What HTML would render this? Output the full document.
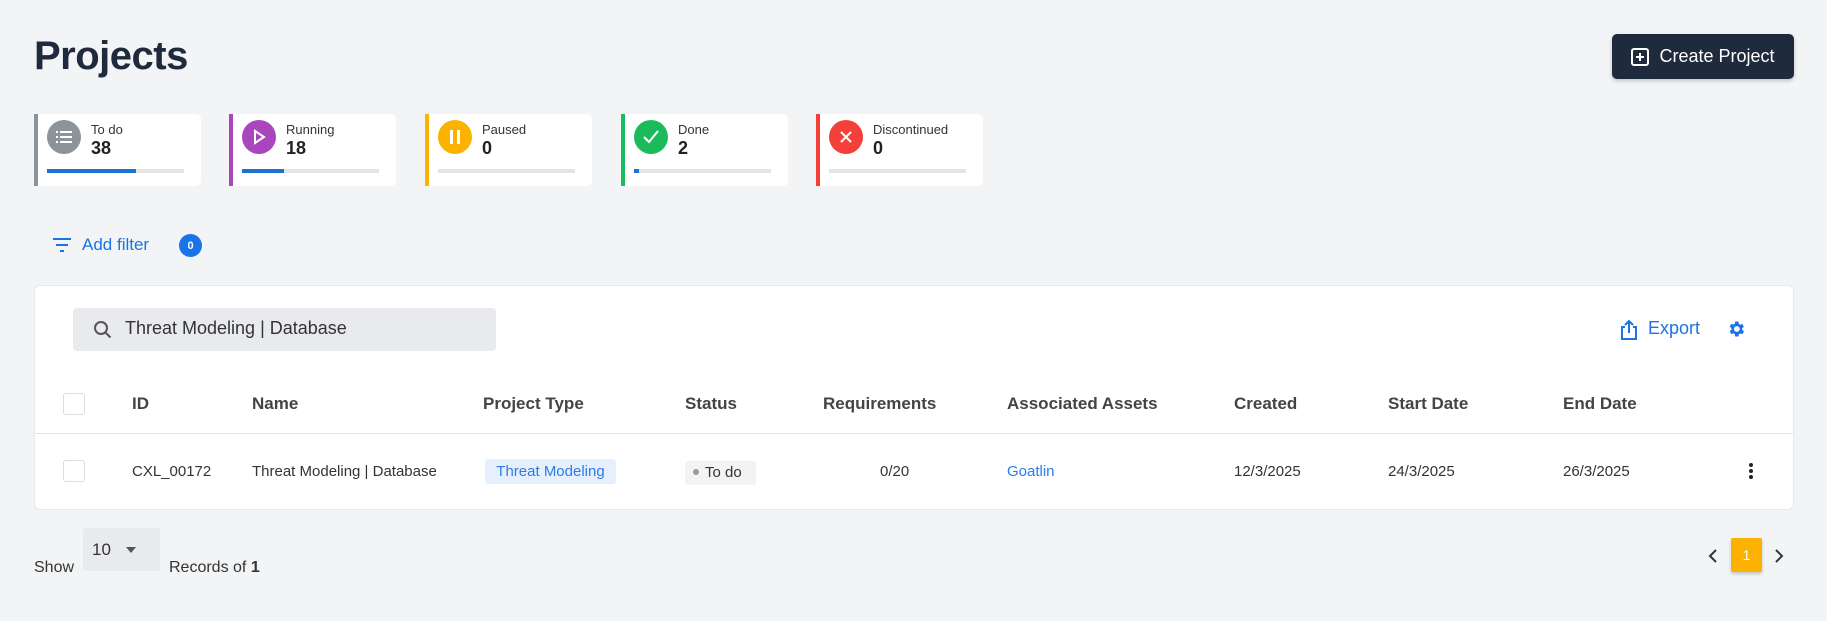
<!DOCTYPE html>
<html><head><meta charset="utf-8"><style>
*{box-sizing:border-box;margin:0;padding:0}
body{width:1827px;height:621px;background:#f3f4f6;font-family:"Liberation Sans",sans-serif;color:#222;position:relative;overflow:hidden}
.a{position:absolute;white-space:nowrap}
h1{position:absolute;left:34px;top:34px;font-size:40px;font-weight:bold;color:#1f2a3c;letter-spacing:-0.5px}
.btn{left:1612px;top:34px;width:182px;height:45px;background:#1f2a3c;border-radius:5px;color:#fff;font-size:18px;display:flex;align-items:center;justify-content:center;gap:10px;box-shadow:0 2px 4px rgba(0,0,0,.2)}
.card{position:absolute;top:114px;width:167px;height:72px;background:#fff;border-radius:0 5px 5px 0;border-left:4px solid}
.card .ic{position:absolute;left:9px;top:6px;width:34px;height:34px;border-radius:50%;display:flex;align-items:center;justify-content:center;color:#fff}
.card .lb{position:absolute;left:53px;top:8px;font-size:13px;color:#333}
.card .n{position:absolute;left:53px;top:24px;font-size:18px;font-weight:bold;color:#222}
.card .bar{position:absolute;left:9px;top:55px;width:137px;height:4px;background:#e4e4e4}
.card .bar i{display:block;height:4px;background:#1e73d2}
.tbl{left:34px;top:285px;width:1760px;height:225px;background:#fff;border-radius:6px;border:1px solid #e8e9ec}
.th{position:absolute;top:394px;font-size:17px;font-weight:bold;color:#444}
.td{position:absolute;top:463px;font-size:15px;color:#333}
.cb{position:absolute;left:63px;width:22px;height:22px;border:1px solid #ddd;border-radius:3px;background:#fff}
</style></head><body>
<h1>Projects</h1>
<div class="a btn"><svg width="18" height="18" viewBox="0 0 18 18"><rect x="1" y="1" width="16" height="16" rx="2" fill="none" stroke="#fff" stroke-width="2"/><path d="M9 5v8M5 9h8" stroke="#fff" stroke-width="2"/></svg>Create Project</div>

<div class="card" style="left:34px;border-color:#8d939b"><div class="ic" style="background:#8d939b"><svg width="16" height="14"><g fill="#fff"><rect x="0" y="1" width="2" height="2"/><rect x="4" y="1" width="12" height="2"/><rect x="0" y="6" width="2" height="2"/><rect x="4" y="6" width="12" height="2"/><rect x="0" y="11" width="2" height="2"/><rect x="4" y="11" width="12" height="2"/></g></svg></div><div class="lb">To do</div><div class="n">38</div><div class="bar"><i style="width:89px"></i></div></div>
<div class="card" style="left:229px;border-color:#a946bb"><div class="ic" style="background:#a946bb"><svg width="14" height="16"><path d="M3 2L12 8L3 14Z" fill="none" stroke="#fff" stroke-width="2"/></svg></div><div class="lb">Running</div><div class="n">18</div><div class="bar"><i style="width:42px"></i></div></div>
<div class="card" style="left:425px;border-color:#fbb200"><div class="ic" style="background:#fbb200"><svg width="14" height="16"><rect x="2" y="1" width="3" height="14" fill="#fff"/><rect x="9" y="1" width="3" height="14" fill="#fff"/></svg></div><div class="lb">Paused</div><div class="n">0</div><div class="bar"></div></div>
<div class="card" style="left:621px;border-color:#1bbb5c"><div class="ic" style="background:#1bbb5c"><svg width="18" height="16"><path d="M2 8l5 5L16 2" fill="none" stroke="#fff" stroke-width="2"/></svg></div><div class="lb">Done</div><div class="n">2</div><div class="bar"><i style="width:5px"></i></div></div>
<div class="card" style="left:816px;border-color:#f5403a"><div class="ic" style="background:#f5403a"><svg width="12" height="12"><path d="M1 1l10 10M11 1L1 11" stroke="#fff" stroke-width="2"/></svg></div><div class="lb">Discontinued</div><div class="n">0</div><div class="bar"></div></div>

<svg class="a" style="left:52px;top:237px" width="20" height="16"><path d="M1 2h18M4 8h12M8 14h4" stroke="#1a73e8" stroke-width="2"/></svg>
<div class="a" style="left:82px;top:235px;font-size:17px;color:#1a73e8">Add filter</div>
<div class="a" style="left:179px;top:234px;width:23px;height:23px;border-radius:50%;background:#1a73e8;color:#fff;font-size:11px;font-weight:bold;display:flex;align-items:center;justify-content:center">0</div>

<div class="a tbl"></div>
<div class="a" style="left:73px;top:308px;width:423px;height:43px;background:#e8eaee;border-radius:4px"></div>
<svg class="a" style="left:93px;top:320px" width="20" height="20"><circle cx="8" cy="8" r="6" fill="none" stroke="#555" stroke-width="2"/><path d="M12.5 12.5l5 5" stroke="#555" stroke-width="2"/></svg>
<div class="a" style="left:125px;top:318px;font-size:18px;color:#333">Threat Modeling | Database</div>
<svg class="a" style="left:1620px;top:319px" width="18" height="22"><path d="M5 8H2v12h14V8h-3M9 14V2M5 6l4-4 4 4" fill="none" stroke="#1a73e8" stroke-width="2"/></svg>
<div class="a" style="left:1648px;top:318px;font-size:18px;color:#1a73e8">Export</div>
<svg class="a" style="left:1726px;top:319px" width="20" height="20" viewBox="0 0 24 24"><path fill="#1a73e8" d="M19.4 13a7.5 7.5 0 000-2l2.1-1.6-2-3.5-2.5 1a7 7 0 00-1.7-1L15 3h-4l-.4 2.7a7 7 0 00-1.7 1l-2.5-1-2 3.5L6.6 11a7.5 7.5 0 000 2l-2.2 1.6 2 3.5 2.5-1a7 7 0 001.7 1L11 21h4l.4-2.7a7 7 0 001.7-1l2.5 1 2-3.5zM13 15.5a3.5 3.5 0 110-7 3.5 3.5 0 010 7z"/></svg>

<div class="cb" style="top:393px"></div>
<div class="th" style="left:132px">ID</div>
<div class="th" style="left:252px">Name</div>
<div class="th" style="left:483px">Project Type</div>
<div class="th" style="left:685px">Status</div>
<div class="th" style="left:823px">Requirements</div>
<div class="th" style="left:1007px">Associated Assets</div>
<div class="th" style="left:1234px">Created</div>
<div class="th" style="left:1388px">Start Date</div>
<div class="th" style="left:1563px">End Date</div>
<div class="a" style="left:35px;top:433px;width:1758px;height:1px;background:#e3e4e7"></div>

<div class="cb" style="top:460px"></div>
<div class="td" style="left:132px">CXL_00172</div>
<div class="td" style="left:252px">Threat Modeling | Database</div>
<div class="a" style="left:485px;top:459px;width:131px;height:25px;background:#e6f0fd;border-radius:3px;color:#2d7be5;font-size:15px;line-height:25px;text-align:center">Threat Modeling</div>
<div class="a" style="left:685px;top:461px;width:71px;height:24px;background:#f3f3f3;border-radius:3px;font-size:15px;line-height:24px;color:#333;padding-left:8px"><span style="display:inline-block;width:6px;height:6px;border-radius:50%;background:#999;vertical-align:middle;margin-right:6px;margin-top:-2px"></span>To do</div>
<div class="td" style="left:880px">0/20</div>
<div class="td" style="left:1007px;color:#2d7be5">Goatlin</div>
<div class="td" style="left:1234px">12/3/2025</div>
<div class="td" style="left:1388px">24/3/2025</div>
<div class="td" style="left:1563px">26/3/2025</div>
<svg class="a" style="left:1748px;top:462px" width="6" height="18"><circle cx="3" cy="3" r="2" fill="#222"/><circle cx="3" cy="9" r="2" fill="#222"/><circle cx="3" cy="15" r="2" fill="#222"/></svg>

<div class="a" style="left:34px;top:559px;font-size:16px;color:#333">Show</div>
<div class="a" style="left:83px;top:528px;width:77px;height:43px;background:#e8eaee;border-radius:3px"></div>
<div class="a" style="left:92px;top:540px;font-size:17px;color:#333">10</div>
<svg class="a" style="left:126px;top:547px" width="10" height="6"><path d="M0 0h10L5 6z" fill="#555"/></svg>
<div class="a" style="left:169px;top:559px;font-size:16px;color:#333">Records of <b>1</b></div>
<svg class="a" style="left:1708px;top:549px" width="10" height="14"><path d="M8 1L2 7l6 6" fill="none" stroke="#333" stroke-width="2"/></svg>
<div class="a" style="left:1731px;top:538px;width:31px;height:34px;background:#fbb200;border-radius:2px;color:#fff;font-size:14px;line-height:34px;text-align:center;box-shadow:0 2px 3px rgba(0,0,0,.2)">1</div>
<svg class="a" style="left:1774px;top:549px" width="10" height="14"><path d="M2 1l6 6-6 6" fill="none" stroke="#333" stroke-width="2"/></svg>
</body></html>
